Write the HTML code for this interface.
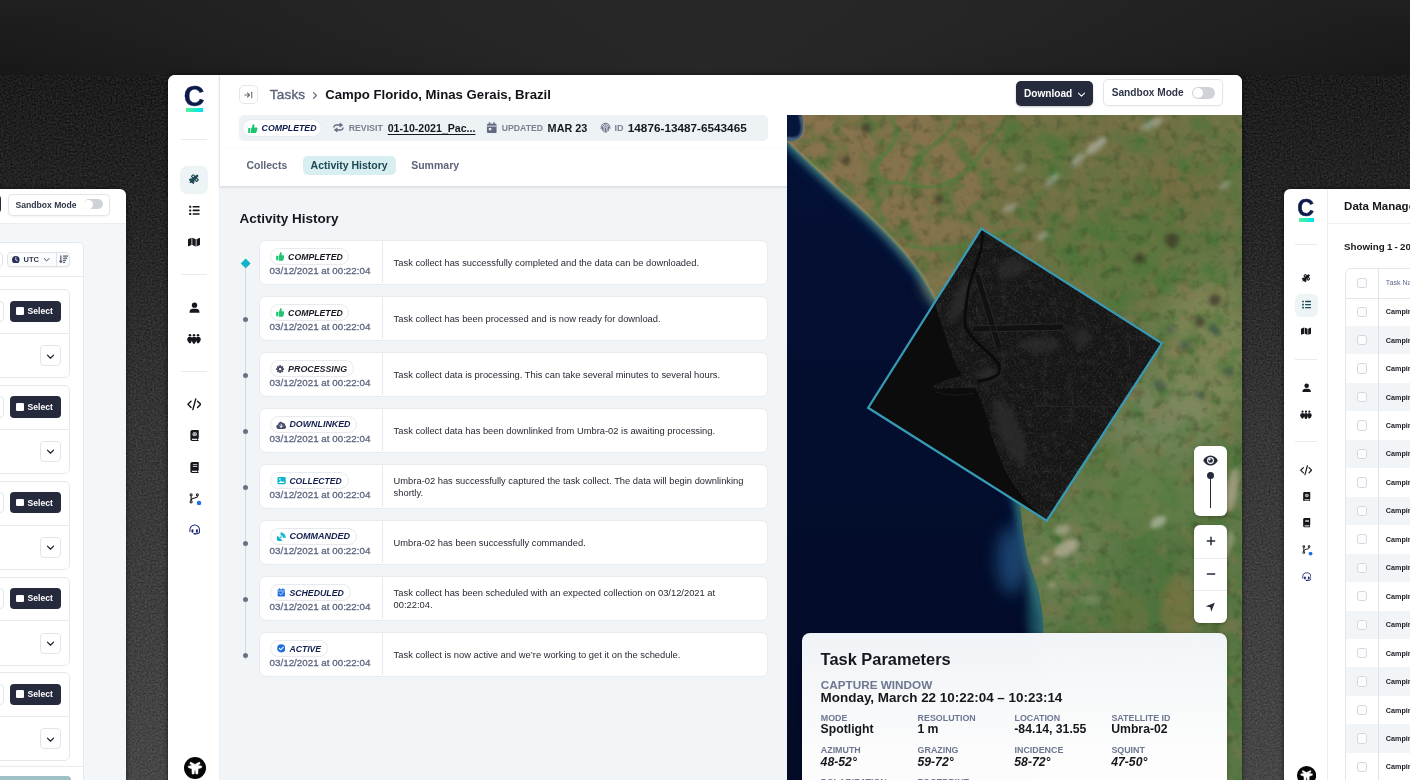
<!DOCTYPE html>
<html lang="en">
<head>
<meta charset="utf-8">
<title>Tasks - Campo Florido, Minas Gerais, Brazil</title>
<style>
*{box-sizing:border-box;margin:0;padding:0}
html,body{width:1410px;height:780px;overflow:hidden;background:#1b1b1b}
body{position:relative;font-family:"Liberation Sans",sans-serif;color:#15171c;-webkit-font-smoothing:antialiased}
.abs{position:absolute}
#bg{position:absolute;left:0;top:0;width:1410px;height:780px;background:linear-gradient(180deg,#202020 0px,#171717 75px,#030303 75px,#111 250px,#242424 430px,#393939 780px)}
#bg svg{position:absolute;left:0;top:75px}
.win{position:absolute;background:#fff;overflow:hidden;box-shadow:0 0 5px rgba(0,0,0,.6)}
/* ---------- main window ---------- */
#main{left:168px;top:75px;width:1074px;height:720px;border-radius:7px 7px 0 0}
#main .side{position:absolute;left:0;top:0;width:52px;height:720px;border-right:1px solid #edf0f3;background:#fff}
.hr{position:absolute;height:1px;background:#e8ecef}
.ico{position:absolute}
#main .content{position:absolute;left:52px;top:111px;width:567px;height:620px;background:#f2f5f8}
#main .head{position:absolute;left:52px;top:0;width:1022px;height:111px;background:#fff;box-shadow:0 1px 3px rgba(40,60,80,.18)}
.t{position:absolute;white-space:nowrap;line-height:1}
.win{will-change:transform}
.card{width:509.3px;height:44.7px;border-radius:7px;background:#fff;border:1px solid #e7ebef}
.b{font-weight:700}
.i{font-style:italic}
</style>
</head>
<body>
<div id="bg"><div style="position:absolute;left:0;top:0;width:1410px;height:75px;background:radial-gradient(ellipse 740px 130px at 50% 100%,rgba(255,255,255,.07),rgba(255,255,255,.035) 55%,rgba(255,255,255,0) 100%)"></div><svg width="1410" height="705" viewBox="0 0 1410 705"><filter id="nz" x="0" y="0" width="100%" height="100%" color-interpolation-filters="sRGB"><feTurbulence type="fractalNoise" baseFrequency="0.55" numOctaves="2" seed="11" result="n"/><feColorMatrix in="n" type="matrix" values="1 0 0 0 0  1 0 0 0 0  1 0 0 0 0  0 0 0 0 0.2"/></filter><rect width="1410" height="705" filter="url(#nz)"/></svg></div>
<!--LEFT-->
<div class="win" id="left" style="left:-30px;top:189px;width:156px;height:620px;border-radius:0 6px 0 0">
<div class="abs" style="left:0;top:34px;width:156px;height:600px;background:#f4f7f9;border-top:1px solid #e9edf0"></div>
<div class="abs" style="left:20px;top:6px;width:11px;height:17.500px;border-radius:4px;background:#252a3c"></div>
<div class="abs" style="left:37.5px;top:4.5px;width:102px;height:22px;border-radius:4.500px;background:#fff;border:1px solid #e1e5e9;box-shadow:0 1px 2px rgba(0,0,0,.05)"></div>
<div class="t b" style="left:45.5px;top:11.62px;font-size:8.6px;color:#2f3548;">Sandbox Mode</div>
<div class="abs" style="left:113.5px;top:10.4px;width:19.200px;height:10px;border-radius:5px;background:#cfd3d8"></div>
<div class="abs" style="left:114.4px;top:11.2px;width:8.400px;height:8.400px;border-radius:50%;background:#fff"></div>
<div class="abs" style="left:10px;top:53.3px;width:103.500px;height:560px;border-radius:5px;background:#fff;border:1px solid #e5e9ed"></div>
<div class="abs" style="left:10px;top:87.4px;width:103px;height:1px;background:#e8ecef"></div>
<div class="abs" style="left:10px;top:576.5px;width:103px;height:1px;background:#e8ecef"></div>
<div class="abs" style="left:10px;top:587.3px;width:90.800px;height:30px;border-radius:4px;background:#9fc1c6"></div>
<div class="abs" style="left:18px;top:63.4px;width:14.500px;height:14.200px;border-radius:4px;background:#fff;border:1px solid #dfe3e8"></div>
<div class="abs" style="left:36.6px;top:63.4px;width:63.800px;height:14.200px;border-radius:4px;background:#fbfcfd;border:1px solid #dfe3e8;box-shadow:0 1px 1px rgba(0,0,0,.04)"></div>
<div class="abs" style="left:86.2px;top:63.4px;width:1px;height:14.200px;background:#dfe3e8"></div>
<svg class="ico" style="left:42.4px;top:66.7px;" width="7.6" height="7.6" viewBox="0 0 16 16"><circle cx="8" cy="8" r="8" fill="#2a3158"/><path d="M8 3.500 V8.400 L11 10" stroke="#fff" stroke-width="1.800" fill="none" stroke-linecap="round"/></svg>
<div class="t b" style="left:53.6px;top:66.85px;font-size:7.5px;color:#2f3548;">UTC</div>
<svg class="ico" style="left:72.6px;top:67.3px;" width="7.2" height="7.2" viewBox="0 0 16 16"><path d="M2.600 5.600 L8 11 L13.400 5.600" fill="none" stroke="#2f3548" stroke-width="2" stroke-linecap="round" stroke-linejoin="round"/></svg>
<svg class="ico" style="left:88.8px;top:66.4px;" width="9.4" height="8.4" viewBox="0 0 18 16"><g fill="none" stroke="#2f3548" stroke-width="1.900" stroke-linecap="round" stroke-linejoin="round"><path d="M3.600 1.500 V14 M1 11.400 L3.600 14.200 L6.200 11.400"/><path d="M8.600 2 H17 M8.600 6 H15 M8.600 10 H13 M8.600 14 H11"/></g></svg>
<div class="abs" style="left:10px;top:100.4px;width:90.400px;height:89px;border-radius:5px;background:#fff;border:1px solid #e5e9ed"></div>
<div class="abs" style="left:10px;top:144.0px;width:90px;height:1px;background:#e8ecef"></div>
<div class="abs" style="left:14px;top:111.6px;width:20px;height:21.400px;border-radius:4px;background:#fff;border:1px solid #e1e5e9"></div>
<div class="abs" style="left:39.9px;top:111.6px;width:51.200px;height:21.400px;border-radius:4px;background:#252a3c"></div>
<div class="abs" style="left:46.0px;top:118.4px;width:7.600px;height:7.600px;border-radius:1.200px;background:#fff"></div>
<div class="t b" style="left:57.6px;top:118.22px;font-size:8.6px;color:#fff;">Select</div>
<div class="abs" style="left:70.2px;top:156.4px;width:21.200px;height:21px;border-radius:4px;background:#fff;border:1px solid #e1e5e9"></div>
<svg class="ico" style="left:76.3px;top:162.6px;" width="9" height="9" viewBox="0 0 16 16"><path d="M2.600 5.600 L8 11 L13.400 5.600" fill="none" stroke="#1d2030" stroke-width="2.2" stroke-linecap="round" stroke-linejoin="round"/></svg>
<div class="abs" style="left:10px;top:196.1px;width:90.400px;height:89px;border-radius:5px;background:#fff;border:1px solid #e5e9ed"></div>
<div class="abs" style="left:10px;top:239.8px;width:90px;height:1px;background:#e8ecef"></div>
<div class="abs" style="left:14px;top:207.3px;width:20px;height:21.400px;border-radius:4px;background:#fff;border:1px solid #e1e5e9"></div>
<div class="abs" style="left:39.9px;top:207.3px;width:51.200px;height:21.400px;border-radius:4px;background:#252a3c"></div>
<div class="abs" style="left:46.0px;top:214.1px;width:7.600px;height:7.600px;border-radius:1.200px;background:#fff"></div>
<div class="t b" style="left:57.6px;top:213.97px;font-size:8.6px;color:#fff;">Select</div>
<div class="abs" style="left:70.2px;top:252.1px;width:21.200px;height:21px;border-radius:4px;background:#fff;border:1px solid #e1e5e9"></div>
<svg class="ico" style="left:76.3px;top:258.3px;" width="9" height="9" viewBox="0 0 16 16"><path d="M2.600 5.600 L8 11 L13.400 5.600" fill="none" stroke="#1d2030" stroke-width="2.2" stroke-linecap="round" stroke-linejoin="round"/></svg>
<div class="abs" style="left:10px;top:291.9px;width:90.400px;height:89px;border-radius:5px;background:#fff;border:1px solid #e5e9ed"></div>
<div class="abs" style="left:10px;top:335.5px;width:90px;height:1px;background:#e8ecef"></div>
<div class="abs" style="left:14px;top:303.1px;width:20px;height:21.400px;border-radius:4px;background:#fff;border:1px solid #e1e5e9"></div>
<div class="abs" style="left:39.9px;top:303.1px;width:51.200px;height:21.400px;border-radius:4px;background:#252a3c"></div>
<div class="abs" style="left:46.0px;top:309.9px;width:7.600px;height:7.600px;border-radius:1.200px;background:#fff"></div>
<div class="t b" style="left:57.6px;top:309.72px;font-size:8.6px;color:#fff;">Select</div>
<div class="abs" style="left:70.2px;top:347.9px;width:21.200px;height:21px;border-radius:4px;background:#fff;border:1px solid #e1e5e9"></div>
<svg class="ico" style="left:76.3px;top:354.1px;" width="9" height="9" viewBox="0 0 16 16"><path d="M2.600 5.600 L8 11 L13.400 5.600" fill="none" stroke="#1d2030" stroke-width="2.2" stroke-linecap="round" stroke-linejoin="round"/></svg>
<div class="abs" style="left:10px;top:387.6px;width:90.400px;height:89px;border-radius:5px;background:#fff;border:1px solid #e5e9ed"></div>
<div class="abs" style="left:10px;top:431.2px;width:90px;height:1px;background:#e8ecef"></div>
<div class="abs" style="left:14px;top:398.9px;width:20px;height:21.400px;border-radius:4px;background:#fff;border:1px solid #e1e5e9"></div>
<div class="abs" style="left:39.9px;top:398.9px;width:51.200px;height:21.400px;border-radius:4px;background:#252a3c"></div>
<div class="abs" style="left:46.0px;top:405.6px;width:7.600px;height:7.600px;border-radius:1.200px;background:#fff"></div>
<div class="t b" style="left:57.6px;top:405.47px;font-size:8.6px;color:#fff;">Select</div>
<div class="abs" style="left:70.2px;top:443.6px;width:21.200px;height:21px;border-radius:4px;background:#fff;border:1px solid #e1e5e9"></div>
<svg class="ico" style="left:76.3px;top:449.9px;" width="9" height="9" viewBox="0 0 16 16"><path d="M2.600 5.600 L8 11 L13.400 5.600" fill="none" stroke="#1d2030" stroke-width="2.2" stroke-linecap="round" stroke-linejoin="round"/></svg>
<div class="abs" style="left:10px;top:483.4px;width:90.400px;height:89px;border-radius:5px;background:#fff;border:1px solid #e5e9ed"></div>
<div class="abs" style="left:10px;top:527.0px;width:90px;height:1px;background:#e8ecef"></div>
<div class="abs" style="left:14px;top:494.6px;width:20px;height:21.400px;border-radius:4px;background:#fff;border:1px solid #e1e5e9"></div>
<div class="abs" style="left:39.9px;top:494.6px;width:51.200px;height:21.400px;border-radius:4px;background:#252a3c"></div>
<div class="abs" style="left:46.0px;top:501.4px;width:7.600px;height:7.600px;border-radius:1.200px;background:#fff"></div>
<div class="t b" style="left:57.6px;top:501.22px;font-size:8.6px;color:#fff;">Select</div>
<div class="abs" style="left:70.2px;top:539.4px;width:21.200px;height:21px;border-radius:4px;background:#fff;border:1px solid #e1e5e9"></div>
<svg class="ico" style="left:76.3px;top:545.6px;" width="9" height="9" viewBox="0 0 16 16"><path d="M2.600 5.600 L8 11 L13.400 5.600" fill="none" stroke="#1d2030" stroke-width="2.2" stroke-linecap="round" stroke-linejoin="round"/></svg>
</div>
<!--/LEFT-->
<!--MAIN-->
<div class="win" id="main">
<!--MAINBODY-->
<div class="side"></div>
<div class="content"></div>
<div class="head"></div>
<div class="abs" style="left:52px;top:0;width:1022px;height:40px;background:#fff"></div>
<div class="t b" style="left:15.7px;top:7.27px;font-size:28.6px;color:#0b1a4a;-webkit-text-stroke:0.45px #0b1a4a">C</div><div class="abs" style="left:17.7px;top:32.6px;width:17.6px;height:4.4px;background:linear-gradient(90deg,#55f59b,#00dff2)"></div>
<div class="hr" style="left:13.2px;top:64.0px;width:26.0px"></div>
<div class="hr" style="left:13.2px;top:199.0px;width:26.0px"></div>
<div class="hr" style="left:13.2px;top:295.8px;width:26.0px"></div>
<div class="abs" style="left:12.3px;top:90.9px;width:27.8px;height:27.8px;border-radius:7.0px;background:#edf4f6"></div>
<svg class="ico" style="left:20.2px;top:98.0px;" width="12.0" height="12.0" viewBox="0 0 16 16"><g fill="#1f4a55"><path d="M1.07 8.13 Q4.80 6.93 8.80 6.40 Q8.93 10.67 8.00 14.67 Q2.67 13.33 1.07 8.13 Z"/></g><g fill="none" stroke="#1f4a55" stroke-linecap="round"><path d="M8.53 7.20 L12.13 3.73" stroke-width="3.33"/><path d="M4.13 11.33 L2.80 12.67" stroke-width="1.47"/><rect x="5.27" y="2.87" width="3.33" height="3.33" rx=".4" transform="rotate(45 6.93 4.53)" stroke-width="1.53"/><rect x="9.80" y="7.40" width="3.33" height="3.33" rx=".4" transform="rotate(45 11.47 9.07)" stroke-width="1.53"/></g></svg>
<svg class="ico" style="left:20.8px;top:130.0px;" width="10.8" height="10.8" viewBox="0 0 16 16"><rect x="0.3" y="1.1" width="3" height="3" rx=".5" fill="#15171c"/><rect x="5.4" y="1.4500000000000002" width="10.300" height="2.300" rx=".6" fill="#15171c"/><rect x="0.3" y="6.5" width="3" height="3" rx=".5" fill="#15171c"/><rect x="5.4" y="6.85" width="10.300" height="2.300" rx=".6" fill="#15171c"/><rect x="0.3" y="11.9" width="3" height="3" rx=".5" fill="#15171c"/><rect x="5.4" y="12.25" width="10.300" height="2.300" rx=".6" fill="#15171c"/></svg>
<svg class="ico" style="left:20.2px;top:160.5px;" width="12.0" height="12.0" viewBox="0 0 16 16"><g fill="#15171c"><path d="M0 4.200 L4.700 2.300 V12 L0 13.900z"/><path d="M5.700 2.300 L10.300 4.200 V13.900 L5.700 12z"/><path d="M11.300 4.200 L16 2.300 V12 L11.300 13.900z"/></g></svg>
<svg class="ico" style="left:20.7px;top:226.7px;" width="11.0" height="11.0" viewBox="0 0 16 16"><g fill="#15171c"><circle cx="8" cy="4.6" r="3.9"/><path d="M0.8 15.6 v-1.2 c0-3 2.6-4.6 4.4-4.6 h5.6 c1.8 0 4.4 1.6 4.4 4.6 v1.2z"/></g></svg>
<svg class="ico" style="left:19.2px;top:257.2px;" width="14.0" height="14.0" viewBox="0 0 16 16"><g fill="#15171c"><circle cx="3.4" cy="3.600" r="1.450"/><circle cx="8" cy="3.600" r="1.450"/><circle cx="12.6" cy="3.600" r="1.450"/><path d="M1.800 5.800 h3.200 c.9 .9 1.100 2.400 .7 3.600 c-.4 1.200 -.8 2.300 -1.500 3.400 h-1.600 c-.9 -1.100 -1.900 -2.300 -2.300 -3.700 c-.3 -1.300 .4 -2.500 1.500 -3.300z"/><path d="M14.200 5.800 h-3.200 c-.9 .9 -1.100 2.400 -.7 3.600 c.4 1.200 .8 2.300 1.500 3.400 h1.600 c.9 -1.100 1.900 -2.300 2.300 -3.700 c.3 -1.300 -.4 -2.500 -1.500 -3.300z"/><path d="M6.300 5.800 h3.400 c.9 1 1.100 2.600 .8 4 c-.3 1.400 -.9 2.600 -1.700 3.700 h-1.600 c-.8 -1.100 -1.400 -2.300 -1.700 -3.700 c-.3 -1.400 -.1 -3 .8 -4z"/></g></svg>
<svg class="ico" style="left:18.9px;top:322.0px;" width="14.6" height="14.6" viewBox="0 0 16 16"><g fill="none" stroke="#15171c" stroke-width="1.550" stroke-linecap="round" stroke-linejoin="round"><path d="M4.400 4.600 L1 8 L4.400 11.400"/><path d="M11.600 4.600 L15 8 L11.600 11.400"/><path d="M9.600 2.200 L6.400 13.800"/></g></svg>
<svg class="ico" style="left:20.7px;top:355.1px;" width="11.0" height="11.0" viewBox="0 0 16 16"><path fill="#15171c" d="M2 2.4 a2.4 2.4 0 0 1 2.4-2.4 h9 a.8.8 0 0 1 .8.8 v11 a.8.8 0 0 1-.8.8 h-.2 v1.8 h.2 a.8.8 0 0 1 0 1.6 h-9 a2.4 2.4 0 0 1-2.4-2.4z"/><circle cx="8.3" cy="6" r="3.1" fill="#fff"/><ellipse cx="8.3" cy="6" rx="1.2" ry="2.9" fill="none" stroke="#15171c" stroke-width=".7"/><path d="M5.4 6 h5.8" stroke="#15171c" stroke-width=".5" fill="none"/><rect x="4.4" y="12.7" width="7.6" height="1.7" fill="#fff"/></svg>
<svg class="ico" style="left:20.7px;top:386.5px;" width="11.0" height="11.0" viewBox="0 0 16 16"><path fill="#15171c" d="M2 2.4 a2.4 2.4 0 0 1 2.4-2.4 h9 a.8.8 0 0 1 .8.8 v11 a.8.8 0 0 1-.8.8 h-.2 v1.8 h.2 a.8.8 0 0 1 0 1.6 h-9 a2.4 2.4 0 0 1-2.4-2.4z"/><rect x="5.6" y="3.4" width="6.4" height="1.1" fill="#fff"/><rect x="5.6" y="5.8" width="6.4" height="1.1" fill="#fff"/><rect x="4.4" y="12.7" width="7.6" height="1.7" fill="#fff"/></svg>
<svg class="ico" style="left:20.9px;top:418.1px;" width="10.6" height="10.6" viewBox="0 0 16 16"><g fill="none" stroke="#15171c" stroke-width="1.700"><path d="M3.200 3 V13"/><path d="M12.600 3.400 V5.400 c0 3 -9.400 1.200 -9.400 5.200"/></g><g fill="#15171c"><circle cx="3.200" cy="2.600" r="2.300"/><circle cx="3.200" cy="13.400" r="2.300"/><circle cx="12.600" cy="2.600" r="2.300"/></g><g fill="#fff"><circle cx="3.200" cy="2.600" r=".85"/><circle cx="3.200" cy="13.400" r=".85"/><circle cx="12.600" cy="2.600" r=".85"/></g></svg>
<svg class="ico" style="left:28.4px;top:425.0px;" width="6.00" height="6.00" viewBox="0 0 6 6"><circle cx="3" cy="3" r="2.25" fill="#1f6fe8"/></svg>
<svg class="ico" style="left:20.5px;top:448.9px;" width="11.4" height="11.4" viewBox="0 0 16 16"><g fill="none" stroke="#1b2676" stroke-width="1.450" stroke-linecap="round"><path d="M1.300 10.400 V8 a6.700 6.700 0 0 1 13.400 0 V10.800 a3 3 0 0 1 -3 3 H9"/></g><g fill="#1b2676"><rect x="3.500" y="7.400" width="2.700" height="4.800" rx="1.100"/><rect x="9.800" y="7.400" width="2.700" height="4.800" rx="1.100"/><rect x="6.200" y="12.700" width="3.800" height="2.100" rx="1"/></g></svg>
<svg class="ico" style="left:15.9px;top:681.7px" width="22.0" height="22.0" viewBox="0 0 24 24"><circle cx="12" cy="12" r="12" fill="#050505"/><path fill="#fff" d="M7.100 5.500 L12 8.100 L16.900 5.500 L17.600 7.300 L14.900 9.200 L19.500 10 L19 11.700 L15.400 12.700 L15.100 18.500 L13 18.500 L12.500 14.200 L11.500 14.200 L11 18.500 L8.900 18.500 L8.600 12.700 L5 11.700 L4.500 10 L9.100 9.200 L6.400 7.300 Z" stroke="#fff" stroke-width=".6" stroke-linejoin="round"/></svg>
<div class="abs" style="left:71px;top:10px;width:19px;height:19px;border:1px solid #e3e7eb;border-radius:5px;background:#fff"></div>
<svg class="ico" style="left:76.0px;top:15.5px;" width="9" height="8" viewBox="0 0 18 16"><g fill="none" stroke="#6b6f78" stroke-width="2.2" stroke-linecap="round" stroke-linejoin="round"><path d="M1.500 8 H10.500 M7 4 L11 8 L7 12"/><path d="M15.500 2.500 V13.500"/></g></svg>
<div class="t" style="left:101.8px;top:13.27px;font-size:13.5px;color:#5d657a;-webkit-text-stroke:0.4px #5d657a;letter-spacing:.2px">Tasks</div>
<svg class="ico" style="left:144.2px;top:16.0px;" width="6" height="9" viewBox="0 0 6 9"><path d="M1.500 1.600 L4.400 4.500 L1.500 7.400" fill="none" stroke="#656d82" stroke-width="1.300" stroke-linecap="round" stroke-linejoin="round"/></svg>
<div class="t b" style="left:157.2px;top:13.43px;font-size:13.2px;color:#121318;">Campo Florido, Minas Gerais, Brazil</div>
<div class="abs" style="left:848px;top:6px;width:77px;height:25px;border-radius:5px;background:#252a3c;box-shadow:0 1px 2px rgba(0,0,0,.25)"></div>
<div class="t b" style="left:856.0px;top:13.75px;font-size:10.1px;color:#fff;">Download</div>
<svg class="ico" style="left:908.6px;top:14.8px;" width="9" height="9" viewBox="0 0 16 16"><path d="M2.600 5.600 L8 11 L13.400 5.600" fill="none" stroke="#fff" stroke-width="1.9" stroke-linecap="round" stroke-linejoin="round"/></svg>
<div class="abs" style="left:934.8px;top:4.2px;width:120.4px;height:26.4px;border-radius:5px;background:#fff;border:1px solid #e1e5e9;box-shadow:0 1px 2px rgba(0,0,0,.05)"></div>
<div class="t b" style="left:943.7px;top:12.81px;font-size:10.15px;color:#2f3548;">Sandbox Mode</div>
<div class="abs" style="left:1024px;top:11.8px;width:22.5px;height:12px;border-radius:6px;background:#cfd3d8"></div>
<div class="abs" style="left:1025px;top:12.8px;width:10px;height:10px;border-radius:5px;background:#fff"></div>
<div class="abs" style="left:71px;top:40.3px;width:529px;height:25.3px;border-radius:5px;background:#edf2f5"></div>
<div class="abs" style="left:75.2px;top:44.7px;width:78.3px;height:16.3px;border-radius:8.2px;background:#fff;box-shadow:0 0 1px rgba(120,140,160,.35)"></div>
<svg class="ico" style="left:80.0px;top:48.6px;" width="9.6" height="9.6" viewBox="0 0 16 16"><g fill="#1ec46f"><rect x="0.3" y="6.8" width="3.4" height="8.4" rx=".7"/><path d="M4.8 7.6 c1.6-1.6 2.2-3 2.4-5.2 c.1-1.2 .8-1.8 1.7-1.8 c1.3 0 1.9 1 1.9 2.4 c0 1.2-.5 2.2-.9 3 h4.2 c1 0 1.7 .8 1.7 1.7 c0 .6-.3 1.1-.7 1.4 c.3 .3 .4 .7 .4 1.1 c0 .8-.5 1.4-1.1 1.6 c.1 .2 .2 .5 .2 .8 c0 .8-.5 1.4-1.2 1.6 c.1 .2 .1 .4 .1 .6 c0 .9-.8 1.6-1.7 1.6 H8.6 c-1.6 0-2.8-.6-3.8-1.2z"/></g></svg>
<div class="t b i" style="left:93.6px;top:48.79px;font-size:8.75px;color:#0d1b4c;">COMPLETED</div>
<svg class="ico" style="left:165.2px;top:47.1px;" width="11" height="11" viewBox="0 0 16 16"><g fill="none" stroke="#636b80" stroke-width="2.100" stroke-linecap="round" stroke-linejoin="round"><path d="M1.400 7.200 C1.600 5.200 2.800 4.500 4.600 4.500 H10.400"/><path d="M14.600 8.800 C14.400 10.800 13.200 11.500 11.400 11.500 H5.600"/></g><g fill="#636b80" stroke="#636b80" stroke-width=".8" stroke-linejoin="round"><path d="M10 1.500 L14.200 4.500 L10 7.500z"/><path d="M6 8.500 L1.800 11.500 L6 14.500z"/></g></svg>
<div class="t b" style="left:180.7px;top:48.89px;font-size:8.75px;color:#7a8193;">REVISIT</div>
<div class="t b" style="left:219.7px;top:48.03px;font-size:10.6px;color:#16181d;text-decoration:underline;text-decoration-thickness:1px;text-underline-offset:1.5px">01-10-2021_Pac...</div>
<svg class="ico" style="left:318.3px;top:46.9px;" width="11.5" height="11.3" viewBox="0 0 16 16"><g fill="#636a80"><rect x="1.2" y="2.4" width="13.6" height="13.2" rx="1.6"/><rect x="3.8" y="0.3" width="2.2" height="3.6" rx=".8"/><rect x="10" y="0.3" width="2.2" height="3.6" rx=".8"/></g><rect x="1.2" y="5.2" width="13.6" height="1.2" fill="#edf2f5"/><rect x="3.8" y="8.4" width="3.6" height="3.4" rx=".5" fill="#edf2f5"/></svg>
<div class="t b" style="left:333.8px;top:48.97px;font-size:8.66px;color:#7a8193;">UPDATED</div>
<div class="t b" style="left:379.6px;top:47.82px;font-size:10.85px;color:#16181d;">MAR 23</div>
<svg class="ico" style="left:431.5px;top:47.0px;" width="11" height="11" viewBox="0 0 16 16"><g fill="none" stroke="#5c647c" stroke-width="1.400" stroke-linecap="round"><path d="M1.6 9.6 c-.6-4.4 2.4-7.8 6.4-7.8 c4 0 6.8 3 6.6 7.4"/><path d="M3.8 12.2 c-.4-1.2-.4-2.4-.3-3.6 c.2-2.6 2-4.6 4.5-4.6 c2.600 0 4.500 2 4.500 4.800 c0 1.400-.1 2.600-.4 3.800"/><path d="M6 14.400 c-.4-1.800-.5-3.600-.4-5.400 c.1-1.500 1.100-2.600 2.400-2.600 c1.400 0 2.400 1.100 2.400 2.700 c0 1.900-.2 3.700-.6 5.300"/><path d="M8 9 c0 2.400-.1 4.400 .2 6"/></g></svg>
<div class="t b" style="left:446.6px;top:48.60px;font-size:9.1px;color:#7a8193;">ID</div>
<div class="t b" style="left:459.8px;top:47.05px;font-size:11.76px;color:#16181d;">14876-13487-6543465</div>
<div class="abs" style="left:52px;top:72px;width:567px;height:1px;background:#f8fafb"></div>
<div class="t b" style="left:78.4px;top:85.31px;font-size:10.5px;color:#5d657a;">Collects</div>
<div class="abs" style="left:135px;top:80.6px;width:93px;height:19.2px;border-radius:5px;background:#d9eef1"></div>
<div class="t b" style="left:142.6px;top:85.31px;font-size:10.5px;color:#1d4853;">Activity History</div>
<div class="t b" style="left:243.2px;top:85.29px;font-size:10.53px;color:#5d657a;">Summary</div>
<div class="t b" style="left:71.4px;top:136.97px;font-size:13.5px;color:#15171c;">Activity History</div>
<div class="abs" style="left:77.0px;top:189px;width:1.4px;height:396px;background:#d6dae1"></div>
<div class="abs card" style="left:90.7px;top:165.20px"></div>
<div class="abs" style="left:214.0px;top:166.20px;width:1px;height:42px;background:#e6eaee"></div>
<div class="abs" style="left:73.8px;top:184.80px;width:7.4px;height:7.4px;background:#12b3c9;transform:rotate(45deg)"></div>
<div class="abs" style="left:102.0px;top:173.00px;width:79.0px;height:17px;border-radius:8.5px;background:#fff;border:1px solid #e6e9ed"></div>
<svg class="ico" style="left:107.5px;top:177.4px;" width="8.6" height="8.6" viewBox="0 0 16 16"><g fill="#1ec46f"><rect x="0.3" y="6.8" width="3.4" height="8.4" rx=".7"/><path d="M4.8 7.6 c1.6-1.6 2.2-3 2.4-5.2 c.1-1.2 .8-1.8 1.7-1.8 c1.3 0 1.9 1 1.9 2.4 c0 1.2-.5 2.2-.9 3 h4.2 c1 0 1.7 .8 1.7 1.7 c0 .6-.3 1.1-.7 1.4 c.3 .3 .4 .7 .4 1.1 c0 .8-.5 1.4-1.1 1.6 c.1 .2 .2 .5 .2 .8 c0 .8-.5 1.4-1.2 1.6 c.1 .2 .1 .4 .1 .6 c0 .9-.8 1.6-1.7 1.6 H8.6 c-1.6 0-2.8-.6-3.8-1.2z"/></g></svg>
<div class="t b i" style="left:120.1px;top:177.63px;font-size:8.71px;color:#16181f;">COMPLETED</div>
<div class="t" style="left:101.6px;top:191.40px;font-size:9.8px;color:#5d6781;-webkit-text-stroke:0.3px #5d6781">03/12/2021 at 00:22:04</div>
<div class="t" style="left:225.6px;top:184.58px;font-size:9.36px;color:#262a33;line-height:11.8px;margin-top:-1.22px">Task collect has successfully completed and the data can be downloaded.</div>
<div class="abs card" style="left:90.7px;top:221.20px"></div>
<div class="abs" style="left:214.0px;top:222.20px;width:1px;height:42px;background:#e6eaee"></div>
<div class="abs" style="left:74.7px;top:241.70px;width:5.6px;height:5.6px;border-radius:50%;background:#6a7288"></div>
<div class="abs" style="left:102.0px;top:229.00px;width:79.0px;height:17px;border-radius:8.5px;background:#fff;border:1px solid #e6e9ed"></div>
<svg class="ico" style="left:107.5px;top:233.4px;" width="8.6" height="8.6" viewBox="0 0 16 16"><g fill="#1ec46f"><rect x="0.3" y="6.8" width="3.4" height="8.4" rx=".7"/><path d="M4.8 7.6 c1.6-1.6 2.2-3 2.4-5.2 c.1-1.2 .8-1.8 1.7-1.8 c1.3 0 1.9 1 1.9 2.4 c0 1.2-.5 2.2-.9 3 h4.2 c1 0 1.7 .8 1.7 1.7 c0 .6-.3 1.1-.7 1.4 c.3 .3 .4 .7 .4 1.1 c0 .8-.5 1.4-1.1 1.6 c.1 .2 .2 .5 .2 .8 c0 .8-.5 1.4-1.2 1.6 c.1 .2 .1 .4 .1 .6 c0 .9-.8 1.6-1.7 1.6 H8.6 c-1.6 0-2.8-.6-3.8-1.2z"/></g></svg>
<div class="t b i" style="left:120.1px;top:233.63px;font-size:8.71px;color:#16181f;">COMPLETED</div>
<div class="t" style="left:101.6px;top:247.40px;font-size:9.8px;color:#5d6781;-webkit-text-stroke:0.3px #5d6781">03/12/2021 at 00:22:04</div>
<div class="t" style="left:225.6px;top:240.58px;font-size:9.36px;color:#262a33;line-height:11.8px;margin-top:-1.22px">Task collect has been processed and is now ready for download.</div>
<div class="abs card" style="left:90.7px;top:277.20px"></div>
<div class="abs" style="left:214.0px;top:278.20px;width:1px;height:42px;background:#e6eaee"></div>
<div class="abs" style="left:74.7px;top:297.70px;width:5.6px;height:5.6px;border-radius:50%;background:#6a7288"></div>
<div class="abs" style="left:102.0px;top:285.00px;width:83.5px;height:17px;border-radius:8.5px;background:#fff;border:1px solid #e6e9ed"></div>
<svg class="ico" style="left:107.7px;top:289.6px;" width="8.2" height="8.2" viewBox="0 0 16 16"><g fill="#474c62"><rect x="6.3" y="0.2" width="3.4" height="4.4" rx=".7" transform="rotate(0 8 8)"/><rect x="6.3" y="0.2" width="3.4" height="4.4" rx=".7" transform="rotate(45 8 8)"/><rect x="6.3" y="0.2" width="3.4" height="4.4" rx=".7" transform="rotate(90 8 8)"/><rect x="6.3" y="0.2" width="3.4" height="4.4" rx=".7" transform="rotate(135 8 8)"/><rect x="6.3" y="0.2" width="3.4" height="4.4" rx=".7" transform="rotate(180 8 8)"/><rect x="6.3" y="0.2" width="3.4" height="4.4" rx=".7" transform="rotate(225 8 8)"/><rect x="6.3" y="0.2" width="3.4" height="4.4" rx=".7" transform="rotate(270 8 8)"/><rect x="6.3" y="0.2" width="3.4" height="4.4" rx=".7" transform="rotate(315 8 8)"/><circle cx="8" cy="8" r="5.4"/></g><circle cx="8" cy="8" r="2.3" fill="#fff"/></svg>
<div class="t b i" style="left:120.1px;top:289.51px;font-size:8.85px;color:#1d1f27;">PROCESSING</div>
<div class="t" style="left:101.6px;top:303.40px;font-size:9.8px;color:#5d6781;-webkit-text-stroke:0.3px #5d6781">03/12/2021 at 00:22:04</div>
<div class="t" style="left:225.6px;top:296.58px;font-size:9.36px;color:#262a33;line-height:11.8px;margin-top:-1.22px">Task collect data is processing. This can take several minutes to several hours.</div>
<div class="abs card" style="left:90.7px;top:333.20px"></div>
<div class="abs" style="left:214.0px;top:334.20px;width:1px;height:42px;background:#e6eaee"></div>
<div class="abs" style="left:74.7px;top:353.70px;width:5.6px;height:5.6px;border-radius:50%;background:#6a7288"></div>
<div class="abs" style="left:102.0px;top:341.00px;width:87.0px;height:17px;border-radius:8.5px;background:#fff;border:1px solid #e6e9ed"></div>
<svg class="ico" style="left:107.9px;top:344.5px;" width="10.4" height="10.4" viewBox="0 0 16 16"><path fill="#474e6b" d="M4 14 a3.6 3.6 0 0 1 -.8-7.100 a4 4 0 0 1 7.400-2.100 a3 3 0 0 1 3.300 3.400 a3.100 3.100 0 0 1 -1.300 5.800z"/><path d="M8 6.400 v4.600 M5.800 9 L8 11.400 L10.200 9" stroke="#fff" stroke-width="1.400" fill="none" stroke-linecap="round" stroke-linejoin="round"/></svg>
<div class="t b i" style="left:121.4px;top:345.48px;font-size:8.88px;color:#14204f;">DOWNLINKED</div>
<div class="t" style="left:101.6px;top:359.40px;font-size:9.8px;color:#5d6781;-webkit-text-stroke:0.3px #5d6781">03/12/2021 at 00:22:04</div>
<div class="t" style="left:225.6px;top:352.58px;font-size:9.36px;color:#262a33;line-height:11.8px;margin-top:-1.22px">Task collect data has been downlinked from Umbra-02 is awaiting processing.</div>
<div class="abs card" style="left:90.7px;top:389.20px"></div>
<div class="abs" style="left:214.0px;top:390.20px;width:1px;height:42px;background:#e6eaee"></div>
<div class="abs" style="left:74.7px;top:409.70px;width:5.6px;height:5.6px;border-radius:50%;background:#6a7288"></div>
<div class="abs" style="left:102.0px;top:397.00px;width:78.6px;height:17px;border-radius:8.5px;background:#fff;border:1px solid #e6e9ed"></div>
<svg class="ico" style="left:108.5px;top:401.1px;" width="9.2" height="9.2" viewBox="0 0 16 16"><rect x="0.800" y="1.600" width="14.400" height="12.800" rx="2" fill="#12b5cf"/><path d="M2.800 12.400 L6.400 8 L8.800 10.600 L10.600 9 L13.400 12.400z" fill="#fff"/><circle cx="5" cy="5.400" r="1.400" fill="#fff"/></svg>
<div class="t b i" style="left:121.4px;top:401.75px;font-size:8.56px;color:#14204f;">COLLECTED</div>
<div class="t" style="left:101.6px;top:415.40px;font-size:9.8px;color:#5d6781;-webkit-text-stroke:0.3px #5d6781">03/12/2021 at 00:22:04</div>
<div class="t" style="left:225.6px;top:402.58px;font-size:9.36px;color:#262a33;line-height:11.8px;margin-top:-1.22px">Umbra-02 has successfully captured the task collect. The data will begin downlinking<br>shortly.</div>
<div class="abs card" style="left:90.7px;top:445.20px"></div>
<div class="abs" style="left:214.0px;top:446.20px;width:1px;height:42px;background:#e6eaee"></div>
<div class="abs" style="left:74.7px;top:465.70px;width:5.6px;height:5.6px;border-radius:50%;background:#6a7288"></div>
<div class="abs" style="left:102.0px;top:453.00px;width:86.6px;height:17px;border-radius:8.5px;background:#fff;border:1px solid #e6e9ed"></div>
<svg class="ico" style="left:108.5px;top:457.1px;" width="9.2" height="9.2" viewBox="0 0 16 16"><g fill="#12b5cf"><path d="M1 6.600 L9.400 15 A5.940 5.940 0 0 1 1 6.600 Z"/><path d="M6.200 .6 A9.200 9.200 0 0 1 15.400 9.800 L10.400 9.800 A4.200 4.200 0 0 0 6.200 5.600 Z"/><circle cx="7.200" cy="8.800" r="1.300"/></g><path d="M5.200 10.800 L7.200 8.800" stroke="#12b5cf" stroke-width="1.600" fill="none"/></svg>
<div class="t b i" style="left:121.4px;top:457.35px;font-size:9.04px;color:#14204f;">COMMANDED</div>
<div class="t" style="left:101.6px;top:471.40px;font-size:9.8px;color:#5d6781;-webkit-text-stroke:0.3px #5d6781">03/12/2021 at 00:22:04</div>
<div class="t" style="left:225.6px;top:464.58px;font-size:9.36px;color:#262a33;line-height:11.8px;margin-top:-1.22px">Umbra-02 has been successfully commanded.</div>
<div class="abs card" style="left:90.7px;top:501.20px"></div>
<div class="abs" style="left:214.0px;top:502.20px;width:1px;height:42px;background:#e6eaee"></div>
<div class="abs" style="left:74.7px;top:521.70px;width:5.6px;height:5.6px;border-radius:50%;background:#6a7288"></div>
<div class="abs" style="left:102.0px;top:509.00px;width:80.8px;height:17px;border-radius:8.5px;background:#fff;border:1px solid #e6e9ed"></div>
<svg class="ico" style="left:108.8px;top:513.4px;" width="8.6" height="8.6" viewBox="0 0 16 16"><g fill="#1f6fe0"><rect x="1.200" y="2.400" width="13.600" height="13.200" rx="1.600"/><rect x="3.800" y="0.300" width="2.200" height="3.600" rx=".8"/><rect x="10" y="0.300" width="2.200" height="3.600" rx=".8"/></g><rect x="1.200" y="5" width="13.600" height="1.200" fill="#fff"/><path d="M4.800 10.400 L7.200 12.600 L11.400 8.200" stroke="#fff" stroke-width="1.600" fill="none" stroke-linecap="round" stroke-linejoin="round"/></svg>
<div class="t b i" style="left:121.4px;top:513.58px;font-size:8.76px;color:#14204f;">SCHEDULED</div>
<div class="t" style="left:101.6px;top:527.40px;font-size:9.8px;color:#5d6781;-webkit-text-stroke:0.3px #5d6781">03/12/2021 at 00:22:04</div>
<div class="t" style="left:225.6px;top:514.58px;font-size:9.36px;color:#262a33;line-height:11.8px;margin-top:-1.22px">Task collect has been scheduled with an expected collection on 03/12/2021 at<br>00:22:04.</div>
<div class="abs card" style="left:90.7px;top:557.20px"></div>
<div class="abs" style="left:214.0px;top:558.20px;width:1px;height:42px;background:#e6eaee"></div>
<div class="abs" style="left:74.7px;top:577.70px;width:5.6px;height:5.6px;border-radius:50%;background:#6a7288"></div>
<div class="abs" style="left:102.0px;top:565.00px;width:58.0px;height:17px;border-radius:8.5px;background:#fff;border:1px solid #e6e9ed"></div>
<svg class="ico" style="left:108.8px;top:569.4px;" width="8.6" height="8.6" viewBox="0 0 16 16"><circle cx="8" cy="8" r="7.600" fill="#1f6fe0"/><path d="M4.400 8.200 L7 10.800 L11.800 5.800" stroke="#fff" stroke-width="1.900" fill="none" stroke-linecap="round" stroke-linejoin="round"/></svg>
<div class="t b i" style="left:121.4px;top:569.66px;font-size:8.67px;color:#14204f;">ACTIVE</div>
<div class="t" style="left:101.6px;top:583.40px;font-size:9.8px;color:#5d6781;-webkit-text-stroke:0.3px #5d6781">03/12/2021 at 00:22:04</div>
<div class="t" style="left:225.6px;top:576.58px;font-size:9.36px;color:#262a33;line-height:11.8px;margin-top:-1.22px">Task collect is now active and we’re working to get it on the schedule.</div>
<svg class="abs" style="left:619px;top:40px" width="455" height="665" viewBox="787 115 455 665">
<defs>
<linearGradient id="oc" x1="0" y1="0" x2="0" y2="1"><stop offset="0" stop-color="#041135"/><stop offset=".25" stop-color="#040f32"/><stop offset=".6" stop-color="#030d2c"/><stop offset="1" stop-color="#030b26"/></linearGradient>
<linearGradient id="ld" gradientUnits="userSpaceOnUse" x1="820" y1="130" x2="1240" y2="640"><stop offset="0" stop-color="#85724c"/><stop offset=".22" stop-color="#7b7048"/><stop offset=".42" stop-color="#697445"/><stop offset=".7" stop-color="#637a4a"/><stop offset="1" stop-color="#5b7746"/></linearGradient>
<filter id="b2" x="-300%" y="-300%" width="700%" height="700%"><feGaussianBlur stdDeviation="2"/></filter>
<filter id="b3" x="-300%" y="-300%" width="700%" height="700%"><feGaussianBlur stdDeviation="3"/></filter>
<filter id="b4" x="-300%" y="-300%" width="700%" height="700%"><feGaussianBlur stdDeviation="4"/></filter>
<filter id="b8" x="-300%" y="-300%" width="700%" height="700%"><feGaussianBlur stdDeviation="8"/></filter>
<filter id="b14" x="-300%" y="-300%" width="700%" height="700%"><feGaussianBlur stdDeviation="14"/></filter>
<filter id="b1" x="-300%" y="-300%" width="700%" height="700%"><feGaussianBlur stdDeviation="0.8"/></filter>
<filter id="texg" x="0" y="0" width="100%" height="100%" color-interpolation-filters="sRGB">
 <feTurbulence type="fractalNoise" baseFrequency="0.045" numOctaves="4" seed="7" result="n"/>
 <feColorMatrix in="n" type="matrix" values="0 0 0 0 0.27  0 0 0 0 0.46  0 0 0 0 0.21  2.6 0 0 0 -1.15" result="g"/>
 <feComposite in="g" in2="SourceGraphic" operator="in"/>
</filter>
<filter id="texb" x="0" y="0" width="100%" height="100%" color-interpolation-filters="sRGB">
 <feTurbulence type="fractalNoise" baseFrequency="0.05" numOctaves="3" seed="21" result="n"/>
 <feColorMatrix in="n" type="matrix" values="0 0 0 0 0.54  0 0 0 0 0.46  0 0 0 0 0.31  0 2.4 0 0 -1.2" result="g"/>
 <feComposite in="g" in2="SourceGraphic" operator="in"/>
</filter>
<filter id="texd" x="0" y="0" width="100%" height="100%" color-interpolation-filters="sRGB">
 <feTurbulence type="fractalNoise" baseFrequency="0.09" numOctaves="3" seed="4" result="n"/>
 <feColorMatrix in="n" type="matrix" values="0 0 0 0 0.18  0 0 0 0 0.26  0 0 0 0 0.13  0 0 2.6 0 -1.35" result="g"/>
 <feComposite in="g" in2="SourceGraphic" operator="in"/>
</filter>
<filter id="sartex" x="0" y="0" width="100%" height="100%" color-interpolation-filters="sRGB">
 <feTurbulence type="fractalNoise" baseFrequency="0.12" numOctaves="4" seed="3" result="n"/>
 <feColorMatrix in="n" type="matrix" values="0 0 0 0 0.26  0 0 0 0 0.26  0 0 0 0 0.26  1.8 0 0 0 -0.8" result="g"/>
 <feComposite in="g" in2="SourceGraphic" operator="in"/>
</filter>
<filter id="sarfine" x="0" y="0" width="100%" height="100%" color-interpolation-filters="sRGB">
 <feTurbulence type="fractalNoise" baseFrequency="0.55" numOctaves="2" seed="9" result="n"/>
 <feColorMatrix in="n" type="matrix" values="0 0 0 0 0.42  0 0 0 0 0.42  0 0 0 0 0.42  2.4 0 0 0 -1.1" result="g"/>
 <feComposite in="g" in2="SourceGraphic" operator="in"/>
</filter>
<clipPath id="sarclip"><polygon points="981.4,228.6 1161.9,343.3 1046.8,520.7 868.1,407.8"/></clipPath>
<clipPath id="mapclip"><rect x="787" y="115" width="455" height="665"/></clipPath>
</defs>
<g clip-path="url(#mapclip)">
<rect x="787" y="115" width="455" height="665" fill="url(#oc)"/>
<path d="M787,141 C805,158 825,177 843,193 C862,209 880,226 896,243 C912,260 926,280 936,300 C950,330 962,360 975,390 C990,425 1005,455 1016,490 C1018,497 1020,503 1020.5,509 C1022,522 1023,534 1025,545 C1027,558 1031,568 1034,576 C1037,585 1039,592 1040,599 C1042,610 1043,618 1043,626 C1044,650 1046,700 1047,790" fill="none" stroke="#0d2f5c" stroke-width="20" filter="url(#b4)" opacity=".55"/>
<path d="M787,141 C805,158 825,177 843,193 C862,209 880,226 896,243 C912,260 926,280 936,300 C950,330 962,360 975,390 C990,425 1005,455 1016,490 C1018,497 1020,503 1020.5,509 C1022,522 1023,534 1025,545 C1027,558 1031,568 1034,576 C1037,585 1039,592 1040,599 C1042,610 1043,618 1043,626 C1044,650 1046,700 1047,790" fill="none" stroke="#2f6f78" stroke-width="10" filter="url(#b3)" opacity=".9"/>
<ellipse cx="1012" cy="560" rx="15" ry="34" fill="#1d4c7a" filter="url(#b8)" opacity=".85"/>
<ellipse cx="1034" cy="610" rx="7" ry="36" fill="#2b7a7c" filter="url(#b4)" opacity=".5"/>
<path d="M787,141 C805,158 825,177 843,193 C862,209 880,226 896,243 C912,260 926,280 936,300 C950,330 962,360 975,390 C990,425 1005,455 1016,490 C1018,497 1020,503 1020.5,509 C1022,522 1023,534 1025,545 C1027,558 1031,568 1034,576 C1037,585 1039,592 1040,599 C1042,610 1043,618 1043,626 C1044,650 1046,700 1047,790 L1250,790 L1250,105 L800,105 C802,118 806,128 801,136 C797,141 792,141 787,141 Z" fill="url(#ld)"/>
<path d="M800,115 L1010,115 C1020,160 1000,200 965,235 C945,252 925,262 915,262 C890,225 850,190 805,150 Z" fill="#8a7550" opacity=".6" filter="url(#b8)"/>
<ellipse cx="955" cy="285" rx="32" ry="22" fill="#8a7650" opacity=".6" filter="url(#b8)"/>
<ellipse cx="1180" cy="190" rx="45" ry="35" fill="#86683f" opacity=".35" filter="url(#b14)"/>
<ellipse cx="1120" cy="250" rx="70" ry="45" fill="#4a7a36" opacity=".35" filter="url(#b14)"/>
<ellipse cx="1040" cy="150" rx="45" ry="30" fill="#4a7a36" opacity=".4" filter="url(#b14)"/>
<ellipse cx="1205" cy="350" rx="45" ry="80" fill="#84895a" opacity=".75" filter="url(#b14)"/><ellipse cx="1160" cy="420" rx="50" ry="40" fill="#8a9272" opacity=".45" filter="url(#b14)"/>
<ellipse cx="1150" cy="590" rx="70" ry="70" fill="#436d38" opacity=".45" filter="url(#b14)"/>
<ellipse cx="1100" cy="700" rx="60" ry="70" fill="#4c6f3b" opacity=".35" filter="url(#b14)"/><ellipse cx="1075" cy="560" rx="40" ry="40" fill="#7d8a5e" opacity=".5" filter="url(#b14)"/>
<ellipse cx="1195" cy="610" rx="22" ry="60" fill="#70794a" opacity=".5" filter="url(#b8)"/>
<path d="M787,141 C805,158 825,177 843,193 C862,209 880,226 896,243 C912,260 926,280 936,300 C950,330 962,360 975,390 C990,425 1005,455 1016,490 C1018,497 1020,503 1020.5,509 C1022,522 1023,534 1025,545 C1027,558 1031,568 1034,576 C1037,585 1039,592 1040,599 C1042,610 1043,618 1043,626 C1044,650 1046,700 1047,790 L1250,790 L1250,105 L800,105 C802,118 806,128 801,136 C797,141 792,141 787,141 Z" fill="#fff" filter="url(#texg)" opacity=".75"/>
<path d="M787,141 C805,158 825,177 843,193 C862,209 880,226 896,243 C912,260 926,280 936,300 C950,330 962,360 975,390 C990,425 1005,455 1016,490 C1018,497 1020,503 1020.5,509 C1022,522 1023,534 1025,545 C1027,558 1031,568 1034,576 C1037,585 1039,592 1040,599 C1042,610 1043,618 1043,626 C1044,650 1046,700 1047,790 L1250,790 L1250,105 L800,105 C802,118 806,128 801,136 C797,141 792,141 787,141 Z" fill="#fff" filter="url(#texb)" opacity=".6"/>
<path d="M787,141 C805,158 825,177 843,193 C862,209 880,226 896,243 C912,260 926,280 936,300 C950,330 962,360 975,390 C990,425 1005,455 1016,490 C1018,497 1020,503 1020.5,509 C1022,522 1023,534 1025,545 C1027,558 1031,568 1034,576 C1037,585 1039,592 1040,599 C1042,610 1043,618 1043,626 C1044,650 1046,700 1047,790 L1250,790 L1250,105 L800,105 C802,118 806,128 801,136 C797,141 792,141 787,141 Z" fill="#fff" filter="url(#texd)" opacity=".4"/>
<path d="M787,141 C805,158 825,177 843,193 C862,209 880,226 896,243 C912,260 926,280 936,300" fill="none" stroke="#b5ad80" stroke-width="1.5" opacity=".75" filter="url(#b1)"/>
<g fill="none" stroke="#47803a" stroke-width="2.6" opacity=".75" filter="url(#b1)"><path d="M890,118 C905,135 890,150 878,160 C872,175 880,185 905,183 C930,192 950,185 965,172 C980,160 990,140 1000,128"/><path d="M905,183 C915,160 925,150 940,140 C950,132 955,124 956,116"/><path d="M905,245 C930,250 955,252 975,240 C990,232 1005,236 1020,228"/><path d="M870,190 C880,200 878,212 884,222"/></g>
<circle cx="866" cy="128" r="5" fill="#3a3628" opacity=".7" filter="url(#b2)"/>
<circle cx="846" cy="160" r="4" fill="#3a3628" opacity=".7" filter="url(#b2)"/>
<circle cx="939" cy="199" r="4.5" fill="#3a3628" opacity=".7" filter="url(#b2)"/>
<circle cx="1172" cy="240" r="7" fill="#3a3628" opacity=".7" filter="url(#b2)"/>
<circle cx="1140" cy="258" r="5" fill="#3a3628" opacity=".7" filter="url(#b2)"/>
<circle cx="1215" cy="300" r="6" fill="#3a3628" opacity=".7" filter="url(#b2)"/>
<circle cx="1200" cy="322" r="5" fill="#3a3628" opacity=".7" filter="url(#b2)"/>
<ellipse cx="1096" cy="146" rx="13" ry="4.5" transform="rotate(-38 1096 146)" fill="#bdbdb8" opacity="0.6" filter="url(#b2)"/>
<ellipse cx="1078" cy="160" rx="9" ry="4" transform="rotate(-40 1078 160)" fill="#bdbdb8" opacity="0.55" filter="url(#b2)"/>
<ellipse cx="1052" cy="180" rx="10" ry="3.5" transform="rotate(-45 1052 180)" fill="#bdbdb8" opacity="0.5" filter="url(#b2)"/>
<ellipse cx="1152" cy="124" rx="12" ry="4" transform="rotate(-25 1152 124)" fill="#bdbdb8" opacity="0.55" filter="url(#b2)"/>
<ellipse cx="1010" cy="208" rx="8" ry="3.5" transform="rotate(-20 1010 208)" fill="#bdbdb8" opacity="0.45" filter="url(#b2)"/>
<ellipse cx="1043" cy="236" rx="7" ry="3.5" transform="rotate(-25 1043 236)" fill="#bdbdb8" opacity="0.45" filter="url(#b2)"/>
<ellipse cx="1225" cy="185" rx="7" ry="3" transform="rotate(-30 1225 185)" fill="#bdbdb8" opacity="0.4" filter="url(#b2)"/>
<ellipse cx="1020" cy="168" rx="6" ry="3" transform="rotate(-30 1020 168)" fill="#bdbdb8" opacity="0.3" filter="url(#b2)"/>
<ellipse cx="1160" cy="385" rx="7" ry="4" transform="rotate(30 1160 385)" fill="#34504a" opacity=".6" filter="url(#b2)"/>
<ellipse cx="1185" cy="345" rx="6" ry="3.5" transform="rotate(20 1185 345)" fill="#34504a" opacity=".6" filter="url(#b2)"/>
<ellipse cx="1215" cy="330" rx="7" ry="4" transform="rotate(40 1215 330)" fill="#34504a" opacity=".6" filter="url(#b2)"/>
<ellipse cx="1200" cy="395" rx="6" ry="3" transform="rotate(25 1200 395)" fill="#34504a" opacity=".6" filter="url(#b2)"/>
<ellipse cx="1228" cy="372" rx="6" ry="3.5" transform="rotate(35 1228 372)" fill="#34504a" opacity=".6" filter="url(#b2)"/>
<ellipse cx="1170" cy="330" rx="5" ry="3" transform="rotate(30 1170 330)" fill="#34504a" opacity=".6" filter="url(#b2)"/>
<ellipse cx="1150" cy="500" rx="45" ry="35" fill="#63844a" opacity=".5" filter="url(#b14)"/>
<ellipse cx="1178" cy="605" rx="16" ry="30" fill="#857542" opacity=".55" filter="url(#b4)"/>
<ellipse cx="1130" cy="615" rx="18" ry="22" fill="#7c7442" opacity=".4" filter="url(#b4)"/>
<ellipse cx="1158" cy="522" rx="9" ry="5" transform="rotate(-30 1158 522)" fill="#d0d0c8" opacity=".55" filter="url(#b2)"/>
<ellipse cx="1066" cy="548" rx="13" ry="7" transform="rotate(-30 1066 548)" fill="#cbbbad" opacity="0.6" filter="url(#b2)"/>
<ellipse cx="1062" cy="530" rx="8" ry="5" transform="rotate(-10 1062 530)" fill="#cbbbad" opacity="0.5" filter="url(#b2)"/>
<ellipse cx="1045" cy="560" rx="5" ry="4" transform="rotate(0 1045 560)" fill="#cbbbad" opacity="0.45" filter="url(#b2)"/>
<ellipse cx="1052" cy="585" rx="4" ry="3" transform="rotate(0 1052 585)" fill="#cbbbad" opacity="0.4" filter="url(#b2)"/>
<ellipse cx="1232" cy="490" rx="6" ry="22" transform="rotate(10 1232 490)" fill="#cbbbad" opacity="0.5" filter="url(#b2)"/>
<ellipse cx="1228" cy="545" rx="5" ry="14" transform="rotate(15 1228 545)" fill="#cbbbad" opacity="0.4" filter="url(#b2)"/>
<ellipse cx="1090" cy="600" rx="10" ry="5" transform="rotate(0 1090 600)" fill="#cbbbad" opacity="0.2" filter="url(#b2)"/>
<path d="M787,115 L800,115 C803,125 804,132 799,137 C795,140 790,139 787,138 Z" fill="#06173e" />
<path d="M800,115 C803,125 804,132 799,137 C795,140 790,139 787,138" fill="none" stroke="#7a9ab0" stroke-width="2.4" opacity=".7" filter="url(#b1)"/>
<g clip-path="url(#sarclip)">
<rect x="860" y="220" width="310" height="310" fill="#0c0c0c"/>
<path d="M981,222 L935.5,305.5 C940,320 948,345 955,363 L962,376 C950,378 940,382 933,386 L936,389 C950,388 965,388 975,388 C982,400 987,418 991,434 C996,450 1001,462 1007,474 C1014,486 1020,494 1027,502 L1047,522 L1175,522 L1175,222 Z" fill="#151515"/>
<path d="M981,222 L935.5,305.5 C940,320 948,345 955,363 L962,376 C950,378 940,382 933,386 L936,389 C950,388 965,388 975,388 C982,400 987,418 991,434 C996,450 1001,462 1007,474 C1014,486 1020,494 1027,502 L1047,522 L1175,522 L1175,222 Z" fill="#fff" filter="url(#sartex)" opacity=".4"/>
<path d="M981,222 L935.5,305.5 C940,320 948,345 955,363 L962,376 C950,378 940,382 933,386 L936,389 C950,388 965,388 975,388 C982,400 987,418 991,434 C996,450 1001,462 1007,474 C1014,486 1020,494 1027,502 L1047,522 L1175,522 L1175,222 Z" fill="#fff" filter="url(#sarfine)" opacity=".32"/>
<g fill="#303030" opacity=".65" filter="url(#b3)"><ellipse cx="1012" cy="268" rx="16" ry="10" transform="rotate(-20 1012 268)"/><ellipse cx="960" cy="300" rx="7" ry="26" transform="rotate(25 960 300)"/><ellipse cx="1010" cy="432" rx="11" ry="36" transform="rotate(-22 1010 432)"/><ellipse cx="988" cy="375" rx="14" ry="6"/><ellipse cx="1082" cy="338" rx="8" ry="11"/><ellipse cx="1040" cy="345" rx="20" ry="8"/></g>
<path d="M982,232 C984,245 978,258 975,268 C970,282 967,292 967,300 C965,312 964,322 966,328 C972,340 984,348 991,355 C998,362 1002,368 998,374 C992,380 984,380 978,381" fill="none" stroke="#0b0b0b" stroke-width="2.800" stroke-linecap="round"/>
<g stroke="#111" stroke-width="5" fill="none" stroke-linecap="butt"><path d="M977,275 L999,347"/><path d="M973,329 L1063,327"/></g>
<g stroke="#2e2e2e" stroke-width=".7" fill="none"><path d="M974,276 L996,348"/><path d="M980,274 L1002,346"/><path d="M973,325.800 L1063,323.800"/><path d="M973,332.200 L1063,330.200"/></g>
<g stroke="#2c2c2c" stroke-width=".8" fill="none"><path d="M1036,406 L1114,407"/><path d="M992,396 L1030,480"/><path d="M1000,392 L1040,478"/><path d="M996,420 L1024,412"/><path d="M1003,440 L1032,432"/><path d="M1010,458 L1038,450"/></g>
<path d="M936,392 C950,396 962,396 974,393" fill="none" stroke="#1c1c1c" stroke-width="1"/>
</g>
<polygon points="981.4,228.6 1161.9,343.3 1046.8,520.7 868.1,407.8" fill="none" stroke="#379ab6" stroke-width="2.2"/>
</g></svg>
<div class="abs" style="left:1026px;top:370.8px;width:33px;height:70px;border-radius:6px;background:#fff;box-shadow:0 1px 3px rgba(0,0,0,.25)"></div>
<svg class="ico" style="left:1035.0px;top:378.2px;" width="15" height="15" viewBox="0 0 16 16"><path fill="#252a3c" d="M8 2.600 C4.400 2.600 1.600 5 0.200 8 C1.600 11 4.400 13.400 8 13.400 C11.600 13.400 14.400 11 15.800 8 C14.400 5 11.600 2.600 8 2.600z"/><circle cx="8" cy="8" r="3.700" fill="#fff"/><circle cx="8" cy="8" r="2.500" fill="#252a3c"/><circle cx="7" cy="7" r="1.100" fill="#fff"/></svg>
<div class="abs" style="left:1041.7px;top:400px;width:1.600px;height:33px;background:#252a3c"></div>
<div class="abs" style="left:1038.9px;top:396.9px;width:7.200px;height:7.200px;border-radius:50%;background:#252a3c"></div>
<div class="abs" style="left:1026px;top:449.7px;width:33px;height:98.800px;border-radius:6px;background:#fff;box-shadow:0 1px 3px rgba(0,0,0,.25)"></div>
<div class="abs" style="left:1026px;top:482.5px;width:33px;height:1px;background:#e8ecef"></div>
<div class="abs" style="left:1026px;top:515.4px;width:33px;height:1px;background:#e8ecef"></div>
<svg class="ico" style="left:1037.5px;top:461.4px;" width="10" height="10" viewBox="0 0 10 10"><path d="M5 .8 V9.200 M.8 5 H9.200" stroke="#252a3c" stroke-width="1.500" fill="none"/></svg>
<svg class="ico" style="left:1037.5px;top:494.2px;" width="10" height="10" viewBox="0 0 10 10"><path d="M.8 5 H9.200" stroke="#252a3c" stroke-width="1.500" fill="none"/></svg>
<svg class="ico" style="left:1037.2px;top:526.6px;" width="10.5" height="10.5" viewBox="0 0 16 16"><path d="M15 1 L9.500 15 L8 8 L1 6.500z" fill="#252a3c"/></svg>
<div class="abs" style="left:634px;top:558.3px;width:425px;height:180px;border-radius:8px;background:linear-gradient(180deg,rgba(244,247,250,.985),rgba(255,255,255,.99) 70%);box-shadow:0 1px 4px rgba(0,0,0,.25)"></div>
<div class="t b" style="left:652.6px;top:575.90px;font-size:16.42px;color:#15171c;">Task Parameters</div>
<div class="t b" style="left:652.8px;top:603.76px;font-size:11.74px;color:#6d7791;">CAPTURE WINDOW</div>
<div class="t b" style="left:652.6px;top:615.71px;font-size:13.45px;color:#15171c;">Monday, March 22 10:22:04 – 10:23:14</div>
<div class="t b" style="left:652.8px;top:638.97px;font-size:8.9px;color:#6d7791;">MODE</div>
<div class="t b" style="left:652.6px;top:648.04px;font-size:12.24px;color:#15171c;">Spotlight</div>
<div class="t b" style="left:749.6px;top:638.97px;font-size:8.9px;color:#6d7791;">RESOLUTION</div>
<div class="t b" style="left:749.4px;top:648.04px;font-size:12.24px;color:#15171c;">1 m</div>
<div class="t b" style="left:846.5px;top:638.97px;font-size:8.9px;color:#6d7791;">LOCATION</div>
<div class="t b" style="left:846.3px;top:648.04px;font-size:12.24px;color:#15171c;">-84.14, 31.55</div>
<div class="t b" style="left:943.4px;top:638.97px;font-size:8.9px;color:#6d7791;">SATELLITE ID</div>
<div class="t b" style="left:943.2px;top:648.04px;font-size:12.24px;color:#15171c;">Umbra-02</div>
<div class="t b" style="left:652.8px;top:671.17px;font-size:8.9px;color:#6d7791;">AZIMUTH</div>
<div class="t b i" style="left:652.6px;top:680.64px;font-size:12.24px;color:#15171c;">48-52°</div>
<div class="t b" style="left:749.6px;top:671.17px;font-size:8.9px;color:#6d7791;">GRAZING</div>
<div class="t b i" style="left:749.4px;top:680.64px;font-size:12.24px;color:#15171c;">59-72°</div>
<div class="t b" style="left:846.5px;top:671.17px;font-size:8.9px;color:#6d7791;">INCIDENCE</div>
<div class="t b i" style="left:846.3px;top:680.64px;font-size:12.24px;color:#15171c;">58-72°</div>
<div class="t b" style="left:943.4px;top:671.17px;font-size:8.9px;color:#6d7791;">SQUINT</div>
<div class="t b i" style="left:943.2px;top:680.64px;font-size:12.24px;color:#15171c;">47-50°</div>
<div class="t b" style="left:652.8px;top:703.37px;font-size:8.9px;color:#6d7791;">POLARIZATION</div>
<div class="t b" style="left:749.6px;top:703.37px;font-size:8.9px;color:#6d7791;">FOOTPRINT</div>
<!--/MAINBODY-->
</div>
<!--RIGHT-->
<div class="win" id="right" style="left:1284px;top:189px;width:160px;height:620px;border-radius:6px 0 0 0">
<div class="abs" style="left:0;top:0;width:44px;height:620px;border-right:1px solid #e9edf0"></div>
<div class="abs" style="left:44px;top:34.2px;width:120px;height:1px;background:#edf0f3"></div>
<div class="t b" style="left:13.3px;top:8.16px;font-size:23.3px;color:#0b1a4a;-webkit-text-stroke:0.45px #0b1a4a">C</div><div class="abs" style="left:14.9px;top:29.0px;width:15.0px;height:3.7px;background:linear-gradient(90deg,#55f59b,#00dff2)"></div>
<div class="hr" style="left:11.2px;top:55.2px;width:22.1px"></div>
<div class="hr" style="left:11.2px;top:170.0px;width:22.1px"></div>
<div class="hr" style="left:11.2px;top:252.3px;width:22.1px"></div>
<svg class="ico" style="left:17.2px;top:84.2px;" width="10.2" height="10.2" viewBox="0 0 16 16"><g fill="#15171c"><path d="M1.07 8.13 Q4.80 6.93 8.80 6.40 Q8.93 10.67 8.00 14.67 Q2.67 13.33 1.07 8.13 Z"/></g><g fill="none" stroke="#15171c" stroke-linecap="round"><path d="M8.53 7.20 L12.13 3.73" stroke-width="3.33"/><path d="M4.13 11.33 L2.80 12.67" stroke-width="1.47"/><rect x="5.27" y="2.87" width="3.33" height="3.33" rx=".4" transform="rotate(45 6.93 4.53)" stroke-width="1.53"/><rect x="9.80" y="7.40" width="3.33" height="3.33" rx=".4" transform="rotate(45 11.47 9.07)" stroke-width="1.53"/></g></svg>
<div class="abs" style="left:10.5px;top:104.6px;width:23.6px;height:23.6px;border-radius:6.0px;background:#edf4f6"></div>
<svg class="ico" style="left:17.7px;top:111.4px;" width="9.2" height="9.2" viewBox="0 0 16 16"><rect x="0.3" y="1.1" width="3" height="3" rx=".5" fill="#1f4a55"/><rect x="5.4" y="1.4500000000000002" width="10.300" height="2.300" rx=".6" fill="#1f4a55"/><rect x="0.3" y="6.5" width="3" height="3" rx=".5" fill="#1f4a55"/><rect x="5.4" y="6.85" width="10.300" height="2.300" rx=".6" fill="#1f4a55"/><rect x="0.3" y="11.9" width="3" height="3" rx=".5" fill="#1f4a55"/><rect x="5.4" y="12.25" width="10.300" height="2.300" rx=".6" fill="#1f4a55"/></svg>
<svg class="ico" style="left:17.2px;top:137.3px;" width="10.2" height="10.2" viewBox="0 0 16 16"><g fill="#15171c"><path d="M0 4.200 L4.700 2.300 V12 L0 13.900z"/><path d="M5.700 2.300 L10.300 4.200 V13.900 L5.700 12z"/><path d="M11.300 4.200 L16 2.300 V12 L11.300 13.900z"/></g></svg>
<svg class="ico" style="left:17.6px;top:193.6px;" width="9.3" height="9.3" viewBox="0 0 16 16"><g fill="#15171c"><circle cx="8" cy="4.6" r="3.9"/><path d="M0.8 15.6 v-1.2 c0-3 2.6-4.6 4.4-4.6 h5.6 c1.8 0 4.4 1.6 4.4 4.6 v1.2z"/></g></svg>
<svg class="ico" style="left:16.3px;top:219.5px;" width="11.9" height="11.9" viewBox="0 0 16 16"><g fill="#15171c"><circle cx="3.4" cy="3.600" r="1.450"/><circle cx="8" cy="3.600" r="1.450"/><circle cx="12.6" cy="3.600" r="1.450"/><path d="M1.800 5.800 h3.200 c.9 .9 1.100 2.400 .7 3.600 c-.4 1.200 -.8 2.300 -1.500 3.400 h-1.600 c-.9 -1.100 -1.900 -2.300 -2.300 -3.700 c-.3 -1.300 .4 -2.500 1.500 -3.300z"/><path d="M14.200 5.800 h-3.200 c-.9 .9 -1.100 2.400 -.7 3.600 c.4 1.200 .8 2.300 1.500 3.400 h1.600 c.9 -1.100 1.900 -2.300 2.300 -3.700 c.3 -1.300 -.4 -2.500 -1.500 -3.300z"/><path d="M6.300 5.800 h3.400 c.9 1 1.100 2.600 .8 4 c-.3 1.400 -.9 2.600 -1.700 3.700 h-1.600 c-.8 -1.100 -1.400 -2.300 -1.700 -3.700 c-.3 -1.400 -.1 -3 .8 -4z"/></g></svg>
<svg class="ico" style="left:16.1px;top:274.6px;" width="12.4" height="12.4" viewBox="0 0 16 16"><g fill="none" stroke="#15171c" stroke-width="1.550" stroke-linecap="round" stroke-linejoin="round"><path d="M4.400 4.600 L1 8 L4.400 11.400"/><path d="M11.600 4.600 L15 8 L11.600 11.400"/><path d="M9.600 2.200 L6.400 13.800"/></g></svg>
<svg class="ico" style="left:17.6px;top:302.7px;" width="9.3" height="9.3" viewBox="0 0 16 16"><path fill="#15171c" d="M2 2.4 a2.4 2.4 0 0 1 2.4-2.4 h9 a.8.8 0 0 1 .8.8 v11 a.8.8 0 0 1-.8.8 h-.2 v1.8 h.2 a.8.8 0 0 1 0 1.6 h-9 a2.4 2.4 0 0 1-2.4-2.4z"/><circle cx="8.3" cy="6" r="3.1" fill="#fff"/><ellipse cx="8.3" cy="6" rx="1.2" ry="2.9" fill="none" stroke="#15171c" stroke-width=".7"/><path d="M5.4 6 h5.8" stroke="#15171c" stroke-width=".5" fill="none"/><rect x="4.4" y="12.7" width="7.6" height="1.7" fill="#fff"/></svg>
<svg class="ico" style="left:17.6px;top:329.4px;" width="9.3" height="9.3" viewBox="0 0 16 16"><path fill="#15171c" d="M2 2.4 a2.4 2.4 0 0 1 2.4-2.4 h9 a.8.8 0 0 1 .8.8 v11 a.8.8 0 0 1-.8.8 h-.2 v1.8 h.2 a.8.8 0 0 1 0 1.6 h-9 a2.4 2.4 0 0 1-2.4-2.4z"/><rect x="5.6" y="3.4" width="6.4" height="1.1" fill="#fff"/><rect x="5.6" y="5.8" width="6.4" height="1.1" fill="#fff"/><rect x="4.4" y="12.7" width="7.6" height="1.7" fill="#fff"/></svg>
<svg class="ico" style="left:17.8px;top:356.3px;" width="9.0" height="9.0" viewBox="0 0 16 16"><g fill="none" stroke="#15171c" stroke-width="1.700"><path d="M3.200 3 V13"/><path d="M12.600 3.400 V5.400 c0 3 -9.400 1.200 -9.400 5.200"/></g><g fill="#15171c"><circle cx="3.200" cy="2.600" r="2.300"/><circle cx="3.200" cy="13.400" r="2.300"/><circle cx="12.600" cy="2.600" r="2.300"/></g><g fill="#fff"><circle cx="3.200" cy="2.600" r=".85"/><circle cx="3.200" cy="13.400" r=".85"/><circle cx="12.600" cy="2.600" r=".85"/></g></svg>
<svg class="ico" style="left:24.2px;top:362.1px;" width="5.10" height="5.10" viewBox="0 0 6 6"><circle cx="3" cy="3" r="2.25" fill="#1f6fe8"/></svg>
<svg class="ico" style="left:17.5px;top:382.5px;" width="9.7" height="9.7" viewBox="0 0 16 16"><g fill="none" stroke="#1b2676" stroke-width="1.450" stroke-linecap="round"><path d="M1.300 10.400 V8 a6.700 6.700 0 0 1 13.400 0 V10.800 a3 3 0 0 1 -3 3 H9"/></g><g fill="#1b2676"><rect x="3.500" y="7.400" width="2.700" height="4.800" rx="1.100"/><rect x="9.800" y="7.400" width="2.700" height="4.800" rx="1.100"/><rect x="6.200" y="12.700" width="3.800" height="2.100" rx="1"/></g></svg>
<svg class="ico" style="left:13.0px;top:576.9px" width="19.2" height="19.2" viewBox="0 0 24 24"><circle cx="12" cy="12" r="12" fill="#050505"/><path fill="#fff" d="M7.100 5.500 L12 8.100 L16.900 5.500 L17.600 7.300 L14.900 9.200 L19.500 10 L19 11.700 L15.400 12.700 L15.100 18.500 L13 18.500 L12.500 14.200 L11.500 14.200 L11 18.500 L8.900 18.500 L8.600 12.700 L5 11.700 L4.500 10 L9.100 9.200 L6.400 7.300 Z" stroke="#fff" stroke-width=".6" stroke-linejoin="round"/></svg>
<div class="t b" style="left:60.1px;top:11.57px;font-size:11.5px;color:#15171c;">Data Management</div>
<div class="t b" style="left:60.1px;top:53.15px;font-size:9.75px;color:#15171c;word-spacing:-.5px">Showing 1 - 20 of 138</div>
<div class="abs" style="left:60.5px;top:79.0px;width:120px;height:560px;border-radius:6px 0 0 0;background:#fff;border:1px solid #e3e7eb;overflow:hidden" id="rtable"></div>
<div class="abs" style="left:61.5px;top:136.9px;width:120px;height:28.450px;background:#f1f5f7"></div>
<div class="abs" style="left:61.5px;top:193.9px;width:120px;height:28.450px;background:#f1f5f7"></div>
<div class="abs" style="left:61.5px;top:250.8px;width:120px;height:28.450px;background:#f1f5f7"></div>
<div class="abs" style="left:61.5px;top:307.6px;width:120px;height:28.450px;background:#f1f5f7"></div>
<div class="abs" style="left:61.5px;top:364.5px;width:120px;height:28.450px;background:#f1f5f7"></div>
<div class="abs" style="left:61.5px;top:421.5px;width:120px;height:28.450px;background:#f1f5f7"></div>
<div class="abs" style="left:61.5px;top:478.3px;width:120px;height:28.450px;background:#f1f5f7"></div>
<div class="abs" style="left:61.5px;top:535.2px;width:120px;height:28.450px;background:#f1f5f7"></div>
<div class="abs" style="left:61.5px;top:592.1px;width:120px;height:28.450px;background:#f1f5f7"></div>
<div class="abs" style="left:61.5px;top:108.5px;width:120px;height:1px;background:#e3e7eb"></div>
<div class="abs" style="left:94.3px;top:79.0px;width:1px;height:560px;background:#dfe3e8"></div>
<div class="abs" style="left:72.6px;top:88.8px;width:10.400px;height:10.400px;border-radius:2.600px;background:#fbfcfd;border:1px solid #d3d8de"></div>
<div class="t" style="left:101.8px;top:90.41px;font-size:7.2px;color:#5f6d8e;">Task Name</div>
<div class="abs" style="left:72.6px;top:117.5px;width:10.400px;height:10.400px;border-radius:2.600px;background:#fbfcfd;border:1px solid #d3d8de"></div>
<div class="t b" style="left:101.8px;top:119.21px;font-size:7.2px;color:#1b1d24;">Campinas, São Paulo</div>
<div class="abs" style="left:72.6px;top:145.9px;width:10.400px;height:10.400px;border-radius:2.600px;background:#fbfcfd;border:1px solid #d3d8de"></div>
<div class="t b" style="left:101.8px;top:147.66px;font-size:7.2px;color:#1b1d24;">Campinas, São Paulo</div>
<div class="abs" style="left:72.6px;top:174.4px;width:10.400px;height:10.400px;border-radius:2.600px;background:#fbfcfd;border:1px solid #d3d8de"></div>
<div class="t b" style="left:101.8px;top:176.11px;font-size:7.2px;color:#1b1d24;">Campinas, São Paulo</div>
<div class="abs" style="left:72.6px;top:202.9px;width:10.400px;height:10.400px;border-radius:2.600px;background:#fbfcfd;border:1px solid #d3d8de"></div>
<div class="t b" style="left:101.8px;top:204.56px;font-size:7.2px;color:#1b1d24;">Campinas, São Paulo</div>
<div class="abs" style="left:72.6px;top:231.3px;width:10.400px;height:10.400px;border-radius:2.600px;background:#fbfcfd;border:1px solid #d3d8de"></div>
<div class="t b" style="left:101.8px;top:233.01px;font-size:7.2px;color:#1b1d24;">Campinas, São Paulo</div>
<div class="abs" style="left:72.6px;top:259.8px;width:10.400px;height:10.400px;border-radius:2.600px;background:#fbfcfd;border:1px solid #d3d8de"></div>
<div class="t b" style="left:101.8px;top:261.46px;font-size:7.2px;color:#1b1d24;">Campinas, São Paulo</div>
<div class="abs" style="left:72.6px;top:288.2px;width:10.400px;height:10.400px;border-radius:2.600px;background:#fbfcfd;border:1px solid #d3d8de"></div>
<div class="t b" style="left:101.8px;top:289.91px;font-size:7.2px;color:#1b1d24;">Campinas, São Paulo</div>
<div class="abs" style="left:72.6px;top:316.6px;width:10.400px;height:10.400px;border-radius:2.600px;background:#fbfcfd;border:1px solid #d3d8de"></div>
<div class="t b" style="left:101.8px;top:318.36px;font-size:7.2px;color:#1b1d24;">Campinas, São Paulo</div>
<div class="abs" style="left:72.6px;top:345.1px;width:10.400px;height:10.400px;border-radius:2.600px;background:#fbfcfd;border:1px solid #d3d8de"></div>
<div class="t b" style="left:101.8px;top:346.81px;font-size:7.2px;color:#1b1d24;">Campinas, São Paulo</div>
<div class="abs" style="left:72.6px;top:373.5px;width:10.400px;height:10.400px;border-radius:2.600px;background:#fbfcfd;border:1px solid #d3d8de"></div>
<div class="t b" style="left:101.8px;top:375.26px;font-size:7.2px;color:#1b1d24;">Campinas, São Paulo</div>
<div class="abs" style="left:72.6px;top:402.0px;width:10.400px;height:10.400px;border-radius:2.600px;background:#fbfcfd;border:1px solid #d3d8de"></div>
<div class="t b" style="left:101.8px;top:403.71px;font-size:7.2px;color:#1b1d24;">Campinas, São Paulo</div>
<div class="abs" style="left:72.6px;top:430.5px;width:10.400px;height:10.400px;border-radius:2.600px;background:#fbfcfd;border:1px solid #d3d8de"></div>
<div class="t b" style="left:101.8px;top:432.16px;font-size:7.2px;color:#1b1d24;">Campinas, São Paulo</div>
<div class="abs" style="left:72.6px;top:458.9px;width:10.400px;height:10.400px;border-radius:2.600px;background:#fbfcfd;border:1px solid #d3d8de"></div>
<div class="t b" style="left:101.8px;top:460.61px;font-size:7.2px;color:#1b1d24;">Campinas, São Paulo</div>
<div class="abs" style="left:72.6px;top:487.3px;width:10.400px;height:10.400px;border-radius:2.600px;background:#fbfcfd;border:1px solid #d3d8de"></div>
<div class="t b" style="left:101.8px;top:489.06px;font-size:7.2px;color:#1b1d24;">Campinas, São Paulo</div>
<div class="abs" style="left:72.6px;top:515.8px;width:10.400px;height:10.400px;border-radius:2.600px;background:#fbfcfd;border:1px solid #d3d8de"></div>
<div class="t b" style="left:101.8px;top:517.51px;font-size:7.2px;color:#1b1d24;">Campinas, São Paulo</div>
<div class="abs" style="left:72.6px;top:544.2px;width:10.400px;height:10.400px;border-radius:2.600px;background:#fbfcfd;border:1px solid #d3d8de"></div>
<div class="t b" style="left:101.8px;top:545.96px;font-size:7.2px;color:#1b1d24;">Campinas, São Paulo</div>
<div class="abs" style="left:72.6px;top:572.7px;width:10.400px;height:10.400px;border-radius:2.600px;background:#fbfcfd;border:1px solid #d3d8de"></div>
<div class="t b" style="left:101.8px;top:574.41px;font-size:7.2px;color:#1b1d24;">Campinas, São Paulo</div>
<div class="abs" style="left:72.6px;top:601.1px;width:10.400px;height:10.400px;border-radius:2.600px;background:#fbfcfd;border:1px solid #d3d8de"></div>
<div class="t b" style="left:101.8px;top:602.86px;font-size:7.2px;color:#1b1d24;">Campinas, São Paulo</div>
</div>
<!--/RIGHT-->
</body>
</html>
